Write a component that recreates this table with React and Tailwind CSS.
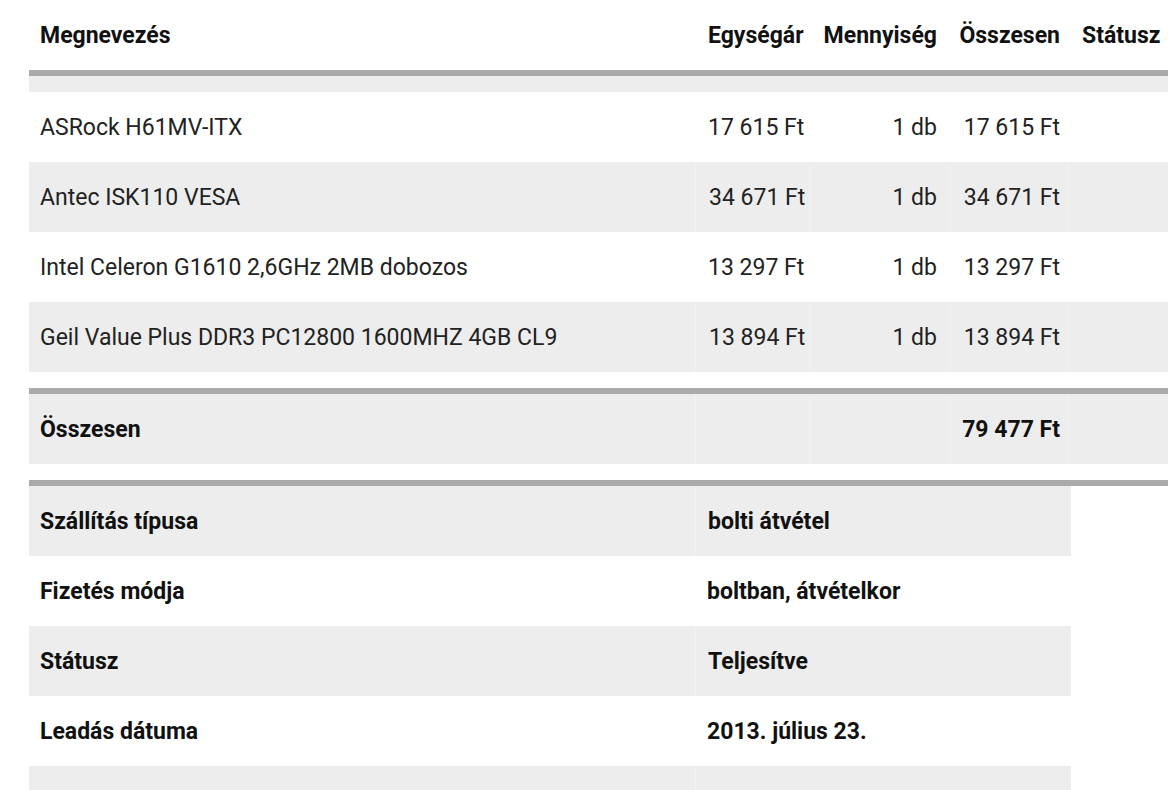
import React from "react";

const items = [
  ["ASRock H61MV-ITX", "17 615 Ft", "1 db", "17 615 Ft"],
  ["Antec ISK110 VESA", "34 671 Ft", "1 db", "34 671 Ft"],
  ["Intel Celeron G1610 2,6GHz 2MB dobozos", "13 297 Ft", "1 db", "13 297 Ft"],
  ["Geil Value Plus DDR3 PC12800 1600MHZ 4GB CL9", "13 894 Ft", "1 db", "13 894 Ft"],
];

const details = [
  ["Szállítás típusa", "bolti átvétel"],
  ["Fizetés módja", "boltban, átvételkor"],
  ["Státusz", "Teljesítve"],
  ["Leadás dátuma", "2013. július 23."],
  ["", ""],
];

const cols = "grid grid-cols-[666px_115px_140px_118px_130px]";

export default function App() {
  return (
    <div
      className="w-[1168px] h-[790px] overflow-hidden bg-white text-[23px] text-[#222]"
      style={{ fontFamily: "Roboto, 'Noto Sans', sans-serif" }}
    >
      <div className="ml-[29px] w-[1169px]">
        {/* header */}
        <div className={`${cols} h-[70px] items-center pt-[3px] font-bold text-[#111]`}>
          <div className="pl-[11px]">Megnevezés</div>
          <div className="pl-[13px]">Egységár</div>
          <div className="pr-[13px] text-right">Mennyiség</div>
          <div className="pr-[8px] text-right">Összesen</div>
          <div className="pl-[14px]">Státusz</div>
        </div>
        <div className="h-[6px] bg-[#aaaaaa]" />
        <div className="h-[16px] bg-[#ededed]" />
        {items.map((r, i) => {
          const gray = i % 2 === 1;
          const sep = gray ? "border-l border-[#f2f2f2]" : "";
          return (
            <div
              key={i}
              className={`${cols} h-[70px] pt-[2px] ${gray ? "bg-[#ededed]" : "bg-white"}`}
            >
              <div className="pl-[11px] flex items-center">{r[0]}</div>
              <div className={`pl-[13px] flex items-center ${sep}`}>{r[1]}</div>
              <div className={`pr-[13px] flex items-center justify-end ${sep}`}>{r[2]}</div>
              <div className={`pr-[8px] flex items-center justify-end ${sep}`}>{r[3]}</div>
              <div className={sep} />
            </div>
          );
        })}
        <div className="h-[16px]" />
        <div className="h-[6px] bg-[#aaaaaa]" />
        <div className={`${cols} h-[70px] pt-[2px] bg-[#ededed] font-bold text-[#111]`}>
          <div className="pl-[11px] flex items-center">Összesen</div>
          <div className="border-l border-[#f2f2f2]" />
          <div className="border-l border-[#f2f2f2]" />
          <div className="pr-[8px] flex items-center justify-end border-l border-[#f2f2f2]">79 477 Ft</div>
          <div className="border-l border-[#f2f2f2]" />
        </div>
        <div className="h-[16px]" />
        <div className="h-[6px] bg-[#aaaaaa]" />
        <div className="w-[1042px]">
          {details.map((r, i) => {
            const gray = i % 2 === 0;
            return (
              <div
                key={i}
                className={`grid grid-cols-[666px_376px] h-[70px] pt-[2px] font-bold text-[#111] ${
                  gray ? "bg-[#ededed]" : "bg-white"
                }`}
              >
                <div className="pl-[11px] flex items-center">{r[0]}</div>
                <div
                  className={`pl-[12px] flex items-center ${
                    gray ? "border-l border-[#f2f2f2]" : ""
                  }`}
                >
                  {r[1]}
                </div>
              </div>
            );
          })}
        </div>
      </div>
    </div>
  );
}
